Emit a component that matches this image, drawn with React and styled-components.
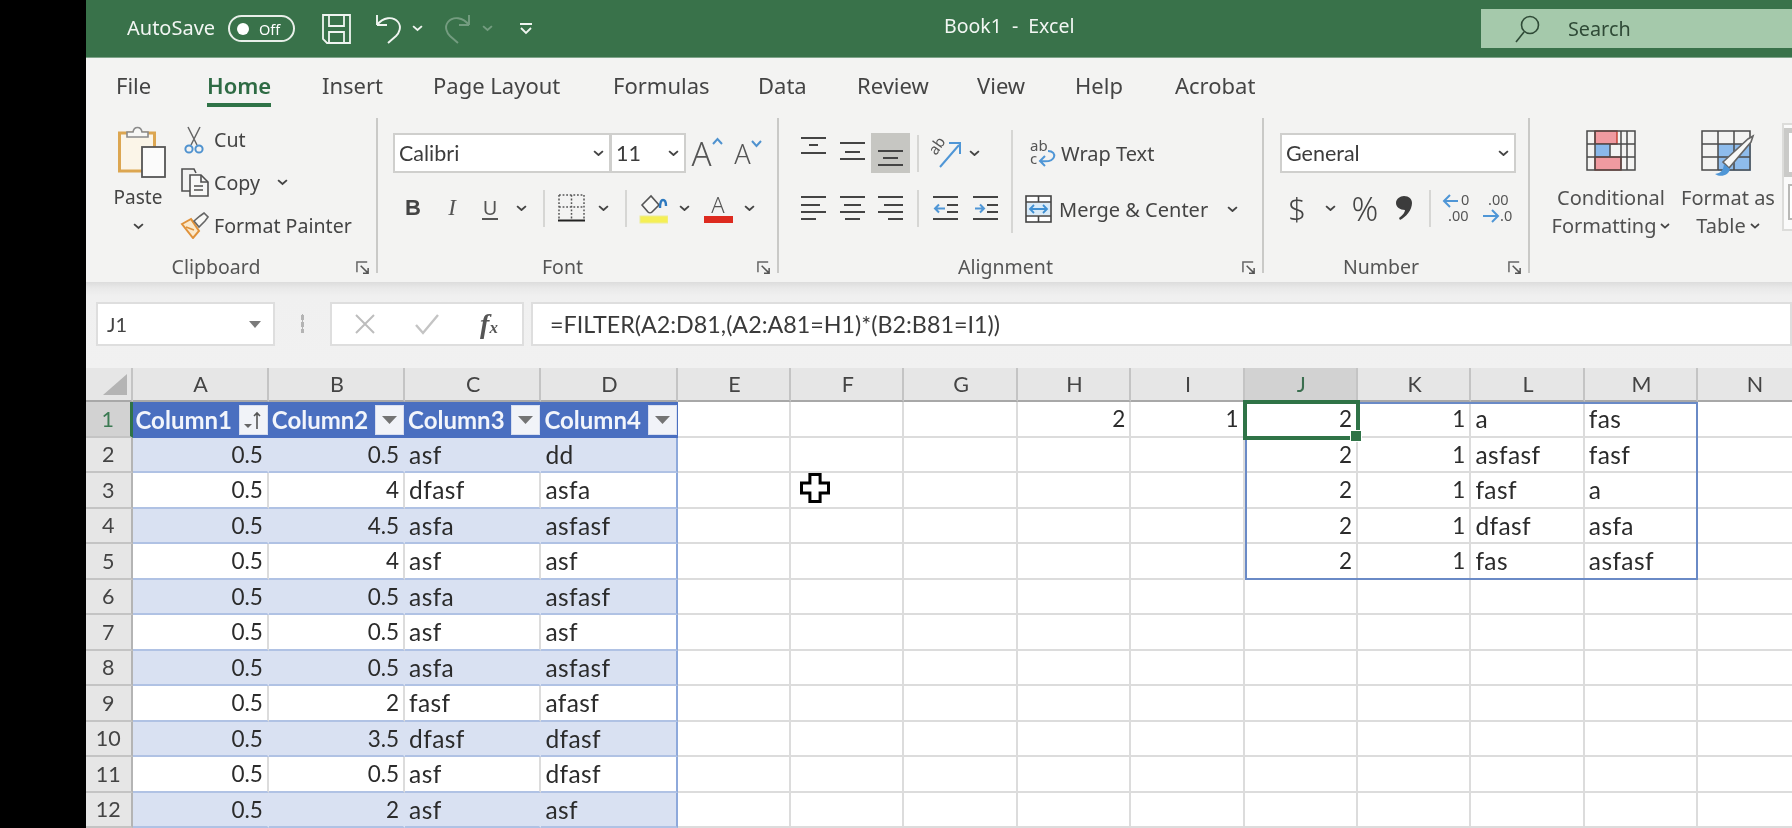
import React from "react";
import styled, { createGlobalStyle } from "styled-components";

const GlobalStyle = createGlobalStyle`
html, body { margin: 0; height: 100%; background: #000; overflow: hidden; }
#root { height: 100%; }
* { box-sizing: border-box; }
`;

const uiFont = `"Noto Sans", "Open Sans", sans-serif`;
const cellFont = `"Lato", "Noto Sans", sans-serif`;

const Shell = styled.div`
width: 1792px;
height: 828px;
padding-left: 86px;
background: #000;
overflow: hidden;
filter: blur(0.65px);
`;
const Window = styled.div`
width: 1706px;
height: 828px;
display: flex;
flex-direction: column;
background: #f3f3f2;
font-family: ${uiFont};
color: #444;
overflow: hidden;
`;

// title bar
const TitleBar = styled.div`
height: 58px;
flex: none;
display: flex;
align-items: center;
background: #39724a;
color: #fff;
border-bottom: 1px solid #7fa48a;
`;
const AutoSave = styled.span`
margin-left: 41px;
width: 101px;
font-size: 20px;
padding-bottom: 2px;
color: #f2f6f3;
`;
const Toggle = styled.span`
width: 67px;
height: 27px;
border: 2px solid #e8efe9;
border-radius: 14px;
display: flex;
align-items: center;
padding-left: 7px;
gap: 10px;
font-size: 14.5px;
`;
const Knob = styled.span`
width: 12px;
height: 12px;
border-radius: 50%;
background: #fff;
`;
const QatSlot = styled.span`
display: flex;
align-items: center;
justify-content: center;
width: ${p => p.$w}px;
margin-left: ${p => p.$ml || 0}px;
opacity: ${p => (p.$dim ? 0.32 : 1)};
`;
const BookTitle = styled.div`
margin-left: 411px;
width: 537px;
font-size: 19.5px;
padding-bottom: 6px;
color: #f2f6f3;
word-spacing: 5px;
`;
const SearchBox = styled.div`
width: 311px;
height: 39px;
flex: none;
background: #a5c9ab;
color: #2f4a36;
display: flex;
align-items: center;
padding-left: 33px;
gap: 28px;
font-size: 19.8px;
`;

// tabs
const TabRow = styled.div`
height: 60px;
flex: none;
display: flex;
padding-left: 30px;
padding-top: 11px;
`;
const Tab = styled.div`
width: ${p => p.$w}px;
font-size: 22px;
line-height: 32px;
white-space: nowrap;
color: ${p => (p.$active ? "#2e6b44" : "#444")};
font-weight: ${p => (p.$active ? 600 : 400)};
`;
const TabLabel = styled.span`
display: inline-block;
height: 38px;
border-bottom: ${p => (p.$active ? "4px solid #2f7347" : "none")};
`;

// ribbon
const Ribbon = styled.div`
height: 164px;
flex: none;
display: flex;
align-items: flex-start;
`;
const Group = styled.section`
width: ${p => p.$w}px;
height: 155px;
flex: none;
display: flex;
flex-direction: column;
border-right: ${p => (p.$open ? "none" : "2px solid #c9c9c7")};
`;
const GroupBody = styled.div`
flex: 1;
display: flex;
min-height: 0;
`;
const GroupFoot = styled.div`
height: 30px;
margin-bottom: -10px;
flex: none;
display: flex;
align-items: center;
font-size: 19.5px;
color: #555;
`;
const GroupName = styled.span`
flex: 1;
text-align: center;
padding: 0 10px 3px 0;
`;
const LauncherSlot = styled.span`
width: 20px;
flex: none;
display: flex;
justify-content: flex-start;
`;
const PasteCol = styled.div`
width: 92px;
padding: 7px 0 0 12px;
display: flex;
flex-direction: column;
align-items: center;
font-size: 19px;
`;
const PasteGlyph = styled.span`
display: flex;
margin-left: 8px;
`;
const PasteLabel = styled.span`
margin-top: 5px;
line-height: 28px;
`;
const PasteChevron = styled.span`
display: flex;
margin-top: 12px;
`;
const ClipCol = styled.div`
display: flex;
flex-direction: column;
`;
const ClipRow = styled.div`
height: 43px;
flex: none;
display: flex;
align-items: center;
font-size: 19.6px;
`;
const ClipIcon = styled.span`
width: 32px;
margin-right: 4px;
display: flex;
justify-content: center;
`;
const Tools = styled.div`
display: flex;
flex-direction: column;
padding: 15px 0 0 ${p => p.$pl || 0}px;
gap: 15px;
`;
const ToolRow = styled.div`
height: 40px;
display: flex;
align-items: center;
`;
const Slot = styled.span`
width: ${p => p.$w}px;
height: ${p => (p.$on ? "40px" : "auto")};
flex: none;
display: flex;
align-items: center;
justify-content: center;
background: ${p => (p.$on ? "#c6c6c2" : "transparent")};
`;
const Combo = styled.div`
width: ${p => p.$w}px;
height: 40px;
flex: none;
background: #fff;
border: 2px solid #cfcfcd;
margin-left: ${p => (p.$joined ? "-1px" : 0)};
display: flex;
align-items: center;
justify-content: space-between;
padding: 0 5px 0 4px;
font-family: ${cellFont};
font-size: 21.5px;
color: #3c3c3c;
`;
const Grow = styled.span`
display: flex;
align-items: flex-start;
color: #555;
font-family: ${uiFont};
font-size: ${p => p.$size}px;
font-weight: 300;
line-height: 1;
`;
const FaceB = styled.span`
font-family: "Liberation Sans", sans-serif;
font-weight: 700;
font-size: 22px;
color: #444;
`;
const FaceI = styled.span`
font-family: "Liberation Serif", serif;
font-style: italic;
font-size: 23px;
color: #555;
`;
const FaceU = styled.span`
font-family: ${uiFont};
font-size: 20px;
color: #555;
border-bottom: 2px solid #555;
line-height: 21px;
padding: 0 1px;
`;
const ColorA = styled.span`
display: flex;
flex-direction: column;
align-items: center;
width: 29px;
font-size: 22px;
line-height: 22px;
color: #555;
font-weight: 300;
`;
const ColorBar = styled.span`
width: 29px;
height: 7px;
margin-top: 1px;
background: ${p => p.$c};
`;
const Sep = styled.span`
width: 2px;
height: 37px;
background: #d6d6d4;
`;
const TallSep = styled.span`
width: 2px;
height: 103px;
margin: 12px 0 0 ${p => p.$ml}px;
background: #d6d6d4;
flex: none;
`;
const WrapCol = styled.div`
display: flex;
flex-direction: column;
padding-top: 15px;
gap: 16px;
font-size: 20px;
white-space: nowrap;
`;
const WrapItem = styled.div`
height: 40px;
display: flex;
align-items: center;
padding-left: ${p => p.$pl}px;
gap: ${p => p.$gap}px;
`;
const BigSymbol = styled.span`
font-size: ${p => p.$size}px;
font-weight: 300;
color: #444;
line-height: 1;
`;
const StyleBtn = styled.div`
width: 114px;
flex: none;
margin-left: ${p => p.$ml || 0}px;
padding: 12px 0 0 ${p => p.$pl || 0}px;
display: flex;
flex-direction: column;
align-items: center;
font-size: 20px;
line-height: 28px;
color: #505050;
white-space: nowrap;
`;
const StyleIcon = styled.span`
display: flex;
height: 42px;
margin-bottom: 12px;
`;
const StyleLine = styled.span`
display: flex;
align-items: center;
gap: 4px;
`;
const Gallery = styled.div`
width: 20px;
height: 108px;
flex: none;
margin-top: 5px;
background: #fafafa;
border: 2px solid #dcdcda;
border-right: none;
padding: 3px 0 0 0;
display: flex;
flex-direction: column;
gap: 7px;
`;
const GalleryCell = styled.span`
height: 49px;
background: #fff;
border: 5px solid #cacac8;
border-right: none;
&:last-child {
    height: 36px;
    border: 2px solid #b8b8b6;
    border-right: none;
    margin-left: 4px;
}
`;

// formula bar
const FormulaArea = styled.div`
height: 86px;
flex: none;
display: flex;
align-items: flex-start;
padding: 20px 0 0 10px;
background: linear-gradient(#dcdcdc 0, #e9e9e9 6px, #f0f0f0 14px, #f1f1f1 100%);
`;
const BarBox = styled.div`
width: ${p => p.$w}px;
flex: ${p => (p.$w ? "none" : 1)};
height: 44px;
background: #fff;
border: 2px solid #dedede;
margin-left: ${p => p.$ml || 0}px;
display: flex;
align-items: center;
font-family: ${cellFont};
color: #444;
`;
const NameText = styled.span`
flex: 1;
font-size: 20px;
padding-left: 9px;
`;
const CaretDown = styled.span`
width: 0;
height: 0;
margin-right: 12px;
border-left: 6px solid transparent;
border-right: 6px solid transparent;
border-top: 7px solid #7a7a7a;
`;
const Dots = styled.span`
width: 3px;
height: 19px;
margin-left: 26px;
margin-top: 12px;
flex: none;
background-image: radial-gradient(#b4b4b4 1.5px, transparent 1.6px);
background-size: 3px 7px;
`;
const FxSlot = styled.span`
width: ${p => p.$w}px;
flex: none;
display: flex;
justify-content: center;
`;
const Fx = styled.span`
font-family: "Liberation Serif", serif;
font-style: italic;
font-weight: 700;
font-size: 28px;
color: #555;
small { font-size: 17px; }
`;
const FormulaText = styled.span`
padding-left: 17px;
font-family: ${cellFont};
font-size: 23.3px;
color: #3a3a3a;
white-space: nowrap;
`;

// sheet
const SheetClip = styled.div`
flex: 1;
min-height: 0;
overflow: hidden;
background: #fff;
`;
const Sheet = styled.div`
display: grid;
position: relative;
width: 1726px;
grid-template-columns: 46.5px repeat(4, 136.3px) repeat(10, 113.4px);
grid-template-rows: 34px repeat(13, 35.5px);
font-family: ${cellFont};
`;
const Corner = styled.div`
background: #e6e6e6;
border-bottom: 2px solid #a8a8a8;
border-right: 2px solid #c4c4c4;
display: flex;
align-items: flex-end;
justify-content: flex-end;
padding: 0 4px 5px 0;
&::after {
    content: "";
    border-style: solid;
    border-width: 0 0 21px 24px;
    border-color: transparent transparent #b4b4b4 transparent;
}
`;
const ColHead = styled.div`
background: ${p => (p.$on ? "#d2d2d2" : "#e6e6e6")};
color: ${p => (p.$on ? "#3b6e4f" : "#444")};
border-right: 2px solid #c4c4c4;
border-bottom: 2px solid ${p => (p.$on ? "#2f7347" : "#a8a8a8")};
padding-left: 2px;
display: flex;
align-items: center;
justify-content: center;
font-size: 21.5px;
`;
const RowHead = styled.div`
background: ${p => (p.$on ? "#d2d2d2" : "#e6e6e6")};
color: ${p => (p.$on ? "#3b7a52" : "#444")};
border-right: ${p => (p.$on ? "3px solid #2f7347" : "2px solid #b4b4b4")};
border-bottom: 2px solid #c4c4c4;
display: flex;
align-items: center;
justify-content: center;
font-size: 21.5px;
`;
const Cell = styled.div`
display: flex;
align-items: center;
justify-content: ${p => (p.$num ? "flex-end" : "flex-start")};
padding: 0 4px;
font-size: ${p => (p.$num ? "22.5px" : "24.5px")};
letter-spacing: ${p => (p.$num ? 0 : "0.4px")};
color: #2b2b2b;
white-space: nowrap;
background: ${p => (p.$band ? "#d9e1f2" : "#fff")};
border-right: 2px solid ${p =>
    p.$last ? "#8ea9db" : p.$band ? "#d9e1f2" : "#dcdcdc"};
border-bottom: 2px solid ${p => (p.$table ? "#b0c2e4" : "#dcdcdc")};
`;
const HeadCell = styled.div`
display: flex;
align-items: center;
justify-content: space-between;
padding: 0 1px 0 3px;
background: #4a6fc0;
color: #f2f5fb;
font-weight: 700;
font-size: 24px;
white-space: nowrap;
overflow: hidden;
`;
const FilterBtn = styled.span`
width: 29px;
height: 30px;
flex: none;
background: #f1f3f8;
border: 1px solid #d7def0;
display: flex;
align-items: center;
justify-content: center;
`;
const SpillFrame = styled.div`
position: absolute;
grid-column: 11 / span 4;
grid-row: 2 / span 5;
inset: 0;
border: 2px solid #6a8ac6;
pointer-events: none;
`;
const ActiveFrame = styled.div`
position: absolute;
grid-column: 11 / span 1;
grid-row: 2 / span 1;
inset: -2px;
border: 4px solid #2f7347;
pointer-events: none;
&::after {
    content: "";
    position: absolute;
    right: -6px;
    bottom: -6px;
    width: 10px;
    height: 10px;
    background: #2f7347;
    border: 1px solid #fff;
}
`;
const CursorMark = styled.svg`
position: absolute;
grid-column: 7 / span 1;
grid-row: 4 / span 1;
left: 9px;
top: 0;
`;

function Chevron({ dark = "#444", size = 11 }) {
    return (
        <svg width={size} height={size * 0.6} viewBox="0 0 10 6">
            <path d="M1 1l4 3.6L9 1" fill="none" stroke={dark} strokeWidth="1.7" />
        </svg>
    );
}

function Launcher() {
    return (
        <svg width="14" height="14" viewBox="0 0 15 15">
            <path d="M1 12V1h11" fill="none" stroke="#666" strokeWidth="1.6" />
            <path d="M5 5l8 8M13 7.5V13H7.5" fill="none" stroke="#555" strokeWidth="1.6" />
        </svg>
    );
}

function SaveIcon() {
    return (
        <svg width="29" height="30" viewBox="0 0 29 30" fill="none" stroke="#f0f5f1" strokeWidth="1.8">
            <path d="M1 1h27v28H5l-4-4z" />
            <path d="M7 1v11h15V1M7 29V18h15v11" />
        </svg>
    );
}

function UndoIcon() {
    return (
        <svg width="27" height="30" viewBox="0 0 27 30" fill="none" stroke="#f0f5f1" strokeWidth="1.9">
            <path d="M2 11h10M2 11V1" />
            <path d="M2 11C8 3 18 2 23 8c4 5 1 11-2 14l-8 7" />
        </svg>
    );
}

function RedoIcon() {
    return (
        <svg width="27" height="30" viewBox="0 0 27 30" fill="none" stroke="#f0f5f1" strokeWidth="1.9">
            <path d="M25 11H15M25 11V1" />
            <path d="M25 11C19 3 9 2 4 8c-4 5-1 11 2 14l8 7" />
        </svg>
    );
}

function QatIcon() {
    return (
        <svg width="14" height="14" viewBox="0 0 14 14" fill="none" stroke="#f0f5f1" strokeWidth="1.8">
            <path d="M1 2h12M2 6l5 5 5-5" />
        </svg>
    );
}

function SearchIcon() {
    return (
        <svg width="26" height="28" viewBox="0 0 26 28" fill="none" stroke="#2f4a36" strokeWidth="1.6">
            <circle cx="16" cy="10" r="8.5" />
            <path d="M10 17L2 27" />
        </svg>
    );
}

function PasteIcon() {
    return (
        <svg width="48" height="53" viewBox="0 0 48 53" fill="none">
            <rect x="1.5" y="8" width="35" height="38" fill="#fbf5e8" stroke="#dca651" strokeWidth="3" />
            <path d="M9 12V7h6c1-6 8-6 9 0h6v5z" fill="#f7f7f5" stroke="#8a8a8a" strokeWidth="1.6" />
            <rect x="24" y="22" width="23" height="30" fill="#fbfbfb" stroke="#555" strokeWidth="1.8" />
        </svg>
    );
}

function CutIcon() {
    return (
        <svg width="20" height="28" viewBox="0 0 20 28" fill="none">
            <path d="M4 1l9 18M16 1L7 19" stroke="#666" strokeWidth="1.5" />
            <circle cx="5" cy="23" r="3.6" stroke="#4f92cf" strokeWidth="2" />
            <circle cx="15" cy="23" r="3.6" stroke="#4f92cf" strokeWidth="2" />
        </svg>
    );
}

function CopyIcon() {
    return (
        <svg width="29" height="29" viewBox="0 0 29 29" fill="#f8f8f7" stroke="#505050" strokeWidth="1.6">
            <path d="M10 23H2V1h12l2 4" fill="none" />
            <path d="M10 7h11l7 7v14H10z" />
            <path d="M21 7v7h7M14 18h9M14 22h9" fill="none" />
        </svg>
    );
}

function PainterIcon() {
    return (
        <svg width="29" height="27" viewBox="0 0 29 27" fill="none">
            <path d="M2 12l9-5 8 12-6 7z" fill="#fbe9cc" stroke="#e0923a" strokeWidth="2" />
            <path d="M6 15l8 3M11 7l3 4" stroke="#e0923a" strokeWidth="1.6" />
            <path d="M14 9l5 6 6-6 3-4-4-4-4 3z" fill="#f8f8f6" stroke="#666" strokeWidth="1.6" />
        </svg>
    );
}

function BorderIcon() {
    return (
        <svg width="27" height="28" viewBox="0 0 27 28" fill="none">
            <path d="M1 1h25M1 1v24M26 1v24M13.5 1v24M1 13h25" stroke="#555" strokeWidth="1.5" strokeDasharray="1.8 1.8" />
            <path d="M0 26.5h27" stroke="#222" strokeWidth="2" />
        </svg>
    );
}

function FillIcon() {
    return (
        <svg width="29" height="31" viewBox="0 0 29 31">
            <path d="M3 12l9-9 8 9-7 7c-1 1-3 1-4 0z" fill="#f8f8f6" stroke="#555" strokeWidth="1.6" />
            <path d="M21 15c0-5 1-8 3-8s3 3 3 6" fill="none" stroke="#2d79bf" strokeWidth="2.4" />
            <rect x="1" y="23" width="28" height="7" fill="#f5ef55" stroke="#ecec9a" />
        </svg>
    );
}

function Caret({ up }) {
    return (
        <svg width="11" height="8" viewBox="0 0 11 8">
            <path d={up ? "M1 7l4.500-5 4.500 5" : "M1 1l4.500 5 4.500-5"} fill="none" stroke="#4f92cf" strokeWidth="2" />
        </svg>
    );
}

function Lines({ rows, w = 25 }) {
    return (
        <svg width={w} height="40" viewBox={`0 0 ${w} 40`} stroke="#444" strokeWidth="2">
            {rows.map(([a, b, y], i) => <line key={i} x1={a} x2={b} y1={y} y2={y} />)}
        </svg>
    );
}

function OrientIcon() {
    return (
        <svg width="32" height="34" viewBox="0 0 32 34">
            <text x="0" y="0" fontFamily="Noto Sans, sans-serif" fontSize="15" fill="#555" transform="translate(5 20) rotate(-55)">ab</text>
            <path d="M9 31L28 9M18 7h11v11" fill="none" stroke="#4f96d6" strokeWidth="2" />
        </svg>
    );
}

function WrapIcon() {
    return (
        <svg width="27" height="30" viewBox="0 0 27 30">
            <text x="1" y="13" fontFamily="Noto Sans, sans-serif" fontSize="15" fill="#555">ab</text>
            <text x="1" y="26" fontFamily="Noto Sans, sans-serif" fontSize="15" fill="#555">c</text>
            <path d="M19 13c5 0 7 3 6 6-1 3-5 5-13 4M16 18l-5 5 5 5" fill="none" stroke="#4f96d6" strokeWidth="2" />
        </svg>
    );
}

function MergeIcon() {
    return (
        <svg width="27" height="28" viewBox="0 0 27 28" fill="none">
            <rect x="1" y="1" width="25" height="26" fill="#fff" stroke="#444" strokeWidth="1.6" />
            <path d="M1 7h25M1 21h25M13.500 1v6M13.500 21v6" stroke="#444" strokeWidth="1.6" />
            <rect x="2" y="8" width="23" height="12" fill="#d8eaf8" />
            <path d="M5 14h17M9 10l-4 4 4 4M18 10l4 4-4 4" stroke="#3f8fd2" strokeWidth="1.8" />
        </svg>
    );
}

function IndentIcon({ dir }) {
    const arrow = dir === "out"
        ? "M12 8H2M6 4L2 8l4 4"
        : "M2 8h9M7 4l4 4-4 4";
    return (
        <svg width="25" height="40" viewBox="0 0 25 40" fill="none">
            <path d="M0 9h25M14 17h11M14 24h11M0 31h25" stroke="#444" strokeWidth="2" />
            <path d={arrow} transform="translate(0 12.500)" stroke="#4f96d6" strokeWidth="2" />
        </svg>
    );
}

function CommaIcon() {
    return (
        <svg width="16" height="24" viewBox="0 0 16 24">
            <path d="M8 0c5 0 8 3 8 7 0 7-6 14-12 17l-1-2c4-3 6-6 6-8C4 14 0 11 0 7c0-4 4-7 8-7z" fill="#3c3c3c" />
        </svg>
    );
}

function DecimalIcon({ more }) {
    return (
        <svg width="30" height="32" viewBox="0 0 30 32" fontFamily="Noto Sans, sans-serif" fontSize="14.5" fill="#555">
            {more ? (
                <>
                    <text x="19" y="13">0</text>
                    <text x="6" y="29">.00</text>
                    <path d="M16 9H2M8 3L2 9l6 6" fill="none" stroke="#4f96d6" strokeWidth="2" />
                </>
            ) : (
                <>
                    <text x="6" y="13">.00</text>
                    <text x="18" y="29">.0</text>
                    <path d="M1 24h15M10 18l6 6-6 6" fill="none" stroke="#4f96d6" strokeWidth="2" />
                </>
            )}
        </svg>
    );
}

function CondIcon() {
    return (
        <svg width="50" height="42" viewBox="0 0 50 42">
            <rect x="9" y="1" width="22" height="13" fill="#f09aa0" stroke="#c0392b" strokeWidth="1.4" />
            <rect x="9" y="14" width="15" height="13" fill="#8ab8ea" />
            <rect x="9" y="27" width="26" height="13" fill="#f09aa0" stroke="#c0392b" strokeWidth="1.4" />
            <path d="M1 1h48v39H1zM1 14h48M1 27h48M9 1v39M24 14v13M35 1v39M41 1v39" fill="none" stroke="#4a4a4a" strokeWidth="1.5" />
        </svg>
    );
}

function TableIcon() {
    return (
        <svg width="54" height="48" viewBox="0 0 54 48">
            <rect x="17" y="14" width="33" height="27" fill="#8ebcec" />
            <path d="M1 1h48v39H1zM1 14h48M1 27h48M17 1v39M33 1v39" fill="none" stroke="#4a4a4a" strokeWidth="1.5" />
            <path d="M22 32L47 9l5-3-2 6-22 26z" fill="#f8f8f6" stroke="#666" strokeWidth="1.6" />
            <path d="M14 44c6-1 8-3 9-10l6 5c-1 6-9 9-15 5z" fill="#4f96d6" />
        </svg>
    );
}

function FilterArrow() {
    return (
        <svg width="15" height="8" viewBox="0 0 15 8">
            <path d="M0 0h15L7.500 8z" fill="#747474" />
        </svg>
    );
}

function SortArrow() {
    return (
        <svg width="22" height="22" viewBox="0 0 22 22">
            <path d="M2 15h8l-4 4z" fill="#666" />
            <path d="M15 20V4M12 7l3-3 3 3" fill="none" stroke="#555" strokeWidth="1.6" />
        </svg>
    );
}

const tabs = [
    ["File", 91], ["Home", 115], ["Insert", 111], ["Page Layout", 180], ["Formulas", 145],
    ["Data", 99], ["Review", 120], ["View", 98], ["Help", 100], ["Acrobat", 81],
];

const letters = "ABCDEFGHIJKLMN".split("");

const tableRows = [
    ["0.5", "0.5", "asf", "dd"],
    ["0.5", "4", "dfasf", "asfa"],
    ["0.5", "4.5", "asfa", "asfasf"],
    ["0.5", "4", "asf", "asf"],
    ["0.5", "0.5", "asfa", "asfasf"],
    ["0.5", "0.5", "asf", "asf"],
    ["0.5", "0.5", "asfa", "asfasf"],
    ["0.5", "2", "fasf", "afasf"],
    ["0.5", "3.5", "dfasf", "dfasf"],
    ["0.5", "0.5", "asf", "dfasf"],
    ["0.5", "2", "asf", "asf"],
];

const spill = [
    [2, 1, "a", "fas"],
    [2, 1, "asfasf", "fasf"],
    [2, 1, "fasf", "a"],
    [2, 1, "dfasf", "asfa"],
    [2, 1, "fas", "asfasf"],
];

// free cells E..N of a row, index 0 is row 1
function freeCells(rowIdx) {
    const values = Array(10).fill(null);
    if (rowIdx === 0) {
        values[3] = 2;
        values[4] = 1;
    }
    if (spill[rowIdx]) {
        spill[rowIdx].forEach((v, i) => { values[5 + i] = v; });
    }
    return values.map((v, i) => (
        <Cell key={i} $num={typeof v === "number"}>{v}</Cell>
    ));
}

export default function App() {
    return (
        <Shell>
            <GlobalStyle />
            <Window>
                <TitleBar>
                    <AutoSave>AutoSave</AutoSave>
                    <Toggle><Knob />Off</Toggle>
                    <QatSlot $w={29} $ml={27}><SaveIcon /></QatSlot>
                    <QatSlot $w={27} $ml={24}><UndoIcon /></QatSlot>
                    <QatSlot $w={14} $ml={8}><Chevron dark="#f0f5f1" /></QatSlot>
                    <QatSlot $w={27} $ml={20} $dim><RedoIcon /></QatSlot>
                    <QatSlot $w={14} $ml={9} $dim><Chevron dark="#f0f5f1" /></QatSlot>
                    <QatSlot $w={14} $ml={25}><QatIcon /></QatSlot>
                    <BookTitle>Book1 - Excel</BookTitle>
                    <SearchBox><SearchIcon />Search</SearchBox>
                </TitleBar>

                <TabRow>
                    {tabs.map(([name, w]) => (
                        <Tab key={name} $w={w} $active={name === "Home"}>
                            <TabLabel $active={name === "Home"}>{name}</TabLabel>
                        </Tab>
                    ))}
                </TabRow>

                <Ribbon>
                    <Group $w={292}>
                        <GroupBody>
                            <PasteCol>
                                <PasteGlyph><PasteIcon /></PasteGlyph>
                                <PasteLabel>Paste</PasteLabel>
                                <PasteChevron><Chevron /></PasteChevron>
                            </PasteCol>
                            <ClipCol>
                                <ClipRow><ClipIcon><CutIcon /></ClipIcon>Cut</ClipRow>
                                <ClipRow>
                                    <ClipIcon><CopyIcon /></ClipIcon>Copy
                                    <Slot $w={46}><Chevron /></Slot>
                                </ClipRow>
                                <ClipRow><ClipIcon><PainterIcon /></ClipIcon>Format Painter</ClipRow>
                            </ClipCol>
                        </GroupBody>
                        <GroupFoot><GroupName>Clipboard</GroupName><LauncherSlot><Launcher /></LauncherSlot></GroupFoot>
                    </Group>

                    <Group $w={401}>
                        <GroupBody>
                            <Tools $pl={15}>
                                <ToolRow>
                                    <Combo $w={218}>Calibri<Chevron /></Combo>
                                    <Combo $w={76} $joined>11<Chevron /></Combo>
                                    <Slot $w={42}><Grow $size={33}>A<Caret up /></Grow></Slot>
                                    <Slot $w={40}><Grow $size={27}>A<Caret /></Grow></Slot>
                                </ToolRow>
                                <ToolRow>
                                    <Slot $w={40}><FaceB>B</FaceB></Slot>
                                    <Slot $w={38}><FaceI>I</FaceI></Slot>
                                    <Slot $w={38}><FaceU>U</FaceU></Slot>
                                    <Slot $w={24}><Chevron /></Slot>
                                    <Slot $w={22}><Sep /></Slot>
                                    <Slot $w={32}><BorderIcon /></Slot>
                                    <Slot $w={32}><Chevron /></Slot>
                                    <Slot $w={14}><Sep /></Slot>
                                    <Slot $w={40}><FillIcon /></Slot>
                                    <Slot $w={22}><Chevron /></Slot>
                                    <Slot $w={46}><ColorA>A<ColorBar $c="#dd2a1f" /></ColorA></Slot>
                                    <Slot $w={16}><Chevron /></Slot>
                                </ToolRow>
                            </Tools>
                        </GroupBody>
                        <GroupFoot><GroupName>Font</GroupName><LauncherSlot><Launcher /></LauncherSlot></GroupFoot>
                    </Group>

                    <Group $w={485}>
                        <GroupBody>
                            <Tools $pl={14}>
                                <ToolRow>
                                    <Slot $w={40}><Lines rows={[[0, 25, 5], [8, 17, 12], [0, 25, 20]]} /></Slot>
                                    <Slot $w={38}><Lines rows={[[0, 25, 10], [5, 20, 19], [0, 25, 26]]} /></Slot>
                                    <Slot $w={39} $on><Lines rows={[[0, 25, 18], [5, 20, 25], [0, 25, 32]]} /></Slot>
                                    <Slot $w={16}><Sep /></Slot>
                                    <Slot $w={42}><OrientIcon /></Slot>
                                    <Slot $w={12}><Chevron /></Slot>
                                </ToolRow>
                                <ToolRow>
                                    <Slot $w={40}><Lines rows={[[0, 25, 9], [0, 19, 17], [0, 25, 24], [0, 15, 31]]} /></Slot>
                                    <Slot $w={38}><Lines rows={[[0, 25, 9], [4, 21, 17], [0, 25, 24], [5, 20, 31]]} /></Slot>
                                    <Slot $w={39}><Lines rows={[[0, 25, 9], [6, 25, 17], [0, 25, 24], [10, 25, 31]]} /></Slot>
                                    <Slot $w={16}><Sep /></Slot>
                                    <Slot $w={39}><IndentIcon dir="out" /></Slot>
                                    <Slot $w={40}><IndentIcon dir="in" /></Slot>
                                </ToolRow>
                            </Tools>
                            <TallSep $ml={6} />
                            <WrapCol>
                                <WrapItem $pl={16} $gap={5}><WrapIcon />Wrap Text</WrapItem>
                                <WrapItem $pl={12} $gap={7}>
                                    <MergeIcon />Merge &amp; Center
                                    <Slot $w={34}><Chevron /></Slot>
                                </WrapItem>
                            </WrapCol>
                        </GroupBody>
                        <GroupFoot><GroupName>Alignment</GroupName><LauncherSlot><Launcher /></LauncherSlot></GroupFoot>
                    </Group>

                    <Group $w={266}>
                        <GroupBody>
                            <Tools $pl={16}>
                                <ToolRow><Combo $w={236}>General<Chevron /></Combo></ToolRow>
                                <ToolRow>
                                    <Slot $w={34}><BigSymbol $size={31}>$</BigSymbol></Slot>
                                    <Slot $w={32}><Chevron /></Slot>
                                    <Slot $w={38}><BigSymbol $size={33}>%</BigSymbol></Slot>
                                    <Slot $w={40}><CommaIcon /></Slot>
                                    <Slot $w={12}><Sep /></Slot>
                                    <Slot $w={41}><DecimalIcon more /></Slot>
                                    <Slot $w={39}><DecimalIcon /></Slot>
                                </ToolRow>
                            </Tools>
                        </GroupBody>
                        <GroupFoot><GroupName>Number</GroupName><LauncherSlot><Launcher /></LauncherSlot></GroupFoot>
                    </Group>

                    <Group $w={272} $open>
                        <GroupBody>
                            <StyleBtn $ml={24}>
                                <StyleIcon><CondIcon /></StyleIcon>
                                <span>Conditional</span>
                                <StyleLine>Formatting <Chevron size={10} /></StyleLine>
                            </StyleBtn>
                            <StyleBtn $pl={6}>
                                <StyleIcon><TableIcon /></StyleIcon>
                                <span>Format as</span>
                                <StyleLine>Table <Chevron size={10} /></StyleLine>
                            </StyleBtn>
                            <Gallery><GalleryCell /><GalleryCell /></Gallery>
                        </GroupBody>
                    </Group>
                </Ribbon>

                <FormulaArea>
                    <BarBox $w={179}>
                        <NameText>J1</NameText>
                        <CaretDown />
                    </BarBox>
                    <Dots />
                    <BarBox $w={194} $ml={26}>
                        <FxSlot $w={66}>
                            <svg width="22" height="22" viewBox="0 0 22 22" fill="none" stroke="#bdbdbd" strokeWidth="2"><path d="M2 2l18 18M20 2L2 20" /></svg>
                        </FxSlot>
                        <FxSlot $w={58}>
                            <svg width="24" height="22" viewBox="0 0 24 22" fill="none" stroke="#c4c4c4" strokeWidth="2.4"><path d="M1 12l7 8L23 2" /></svg>
                        </FxSlot>
                        <FxSlot $w={66}><Fx>f<small>x</small></Fx></FxSlot>
                    </BarBox>
                    <BarBox $ml={7}>
                        <FormulaText>=FILTER(A2:D81,(A2:A81=H1)*(B2:B81=I1))</FormulaText>
                    </BarBox>
                </FormulaArea>

                <SheetClip>
                    <Sheet>
                        <Corner />
                        {letters.map(l => <ColHead key={l} $on={l === "J"}>{l}</ColHead>)}

                        <RowHead $on>1</RowHead>
                        {["Column1", "Column2", "Column3", "Column4"].map((name, i) => (
                            <HeadCell key={name}>
                                {name}
                                <FilterBtn>{i === 0 ? <SortArrow /> : <FilterArrow />}</FilterBtn>
                            </HeadCell>
                        ))}
                        {freeCells(0)}

                        {tableRows.map((row, r) => (
                            <React.Fragment key={r}>
                                <RowHead>{r + 2}</RowHead>
                                {row.map((v, c) => (
                                    <Cell key={c} $table $band={r % 2 === 0} $num={c < 2} $last={c === 3}>{v}</Cell>
                                ))}
                                {freeCells(r + 1)}
                            </React.Fragment>
                        ))}

                        <RowHead>13</RowHead>
                        {Array.from({ length: 14 }, (_, i) => <Cell key={i} />)}

                        <SpillFrame />
                        <ActiveFrame />
                        <CursorMark width="30" height="30" viewBox="0 0 10 10">
                            <path d="M3.300.500h3.400v2.800h2.800v3.400H6.700v2.800H3.300V6.700H.500V3.300h2.800z" fill="#fff" stroke="#000" strokeWidth="1" />
                        </CursorMark>
                    </Sheet>
                </SheetClip>
            </Window>
        </Shell>
    );
}
